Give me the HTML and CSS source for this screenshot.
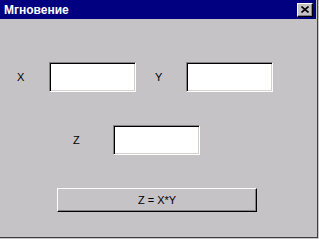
FILE: index.html
```html
<!DOCTYPE html>
<html lang="ru">
<head>
  <meta charset="UTF-8">
  <title>Мгновение</title>
  <link rel="stylesheet" href="styles.css">
</head>
<body>

  <div class="window">
    <!-- Title bar -->
    <div class="titlebar">
      <span class="title">Мгновение</span>
      <button class="close">
        <svg width="8" height="7" viewBox="0 0 8 7">
          <path d="M0.5 0.5 L7.5 6.5 M7.5 0.5 L0.5 6.5" stroke="#000" stroke-width="1.6" fill="none"/>
        </svg>
      </button>
    </div>

    <!-- X and Y -->
    <div class="row row-xy">
      <span class="label label-x">X</span>
      <input class="field" type="text">
      <span class="label label-y">Y</span>
      <input class="field" type="text">
    </div>

    <!-- Z -->
    <div class="row row-z">
      <span class="label label-z">Z</span>
      <input class="field" type="text">
    </div>

    <button class="calc">Z = X*Y</button>
  </div>

</body>
</html>
```

FILE: styles.css
```css
body {
  margin: 0;
  background: #c6c3c6;
  font-family: "Liberation Sans", Arial, sans-serif;
}

.window {
  width: 316px;
  height: 237px;
  padding-right: 1px;
  background: #c6c3c6;
  border-right: 1px solid #404040;
  border-bottom: 1px solid #404040;
}

.titlebar {
  height: 19px;
  background: #000080;
  display: flex;
  align-items: center;
  justify-content: space-between;
}

.title {
  color: #fff;
  font-weight: bold;
  font-size: 12px;
  padding-left: 4px;
}

.close {
  width: 16px;
  height: 14px;
  margin-right: 3px;
  padding: 0;
  background: #c6c3c6;
  border: 1px solid;
  border-color: #fff #000 #000 #fff;
  box-shadow: inset -1px -1px 0 #848284;
  display: flex;
  align-items: center;
  justify-content: center;
}

.row {
  display: flex;
  align-items: center;
}

.row-xy { margin-top: 43px; }
.row-z { margin-top: 33px; }

.label {
  font-size: 11px;
  color: #000;
}

.label-x { margin-left: 17px; width: 32px; }
.label-y { margin-left: 19px; width: 31px; }
.label-z { margin-left: 73px; width: 40px; }

.field {
  box-sizing: border-box;
  width: 87px;
  height: 30px;
  margin: 0;
  padding: 0;
  background: #fff;
  border: 1px solid;
  border-color: #848284 #fff #fff #848284;
  box-shadow: inset 1px 1px 0 #000, inset -1px -1px 0 #d6d3ce;
}

.calc {
  display: block;
  box-sizing: border-box;
  width: 200px;
  height: 24px;
  margin: 33px 0 0 57px;
  padding: 0;
  background: #c6c3c6;
  border: 1px solid;
  border-color: #fff #000 #000 #fff;
  box-shadow: inset -1px -1px 0 #848284;
  font-family: "Liberation Sans", Arial, sans-serif;
  font-size: 11px;
  color: #000;
}
```
